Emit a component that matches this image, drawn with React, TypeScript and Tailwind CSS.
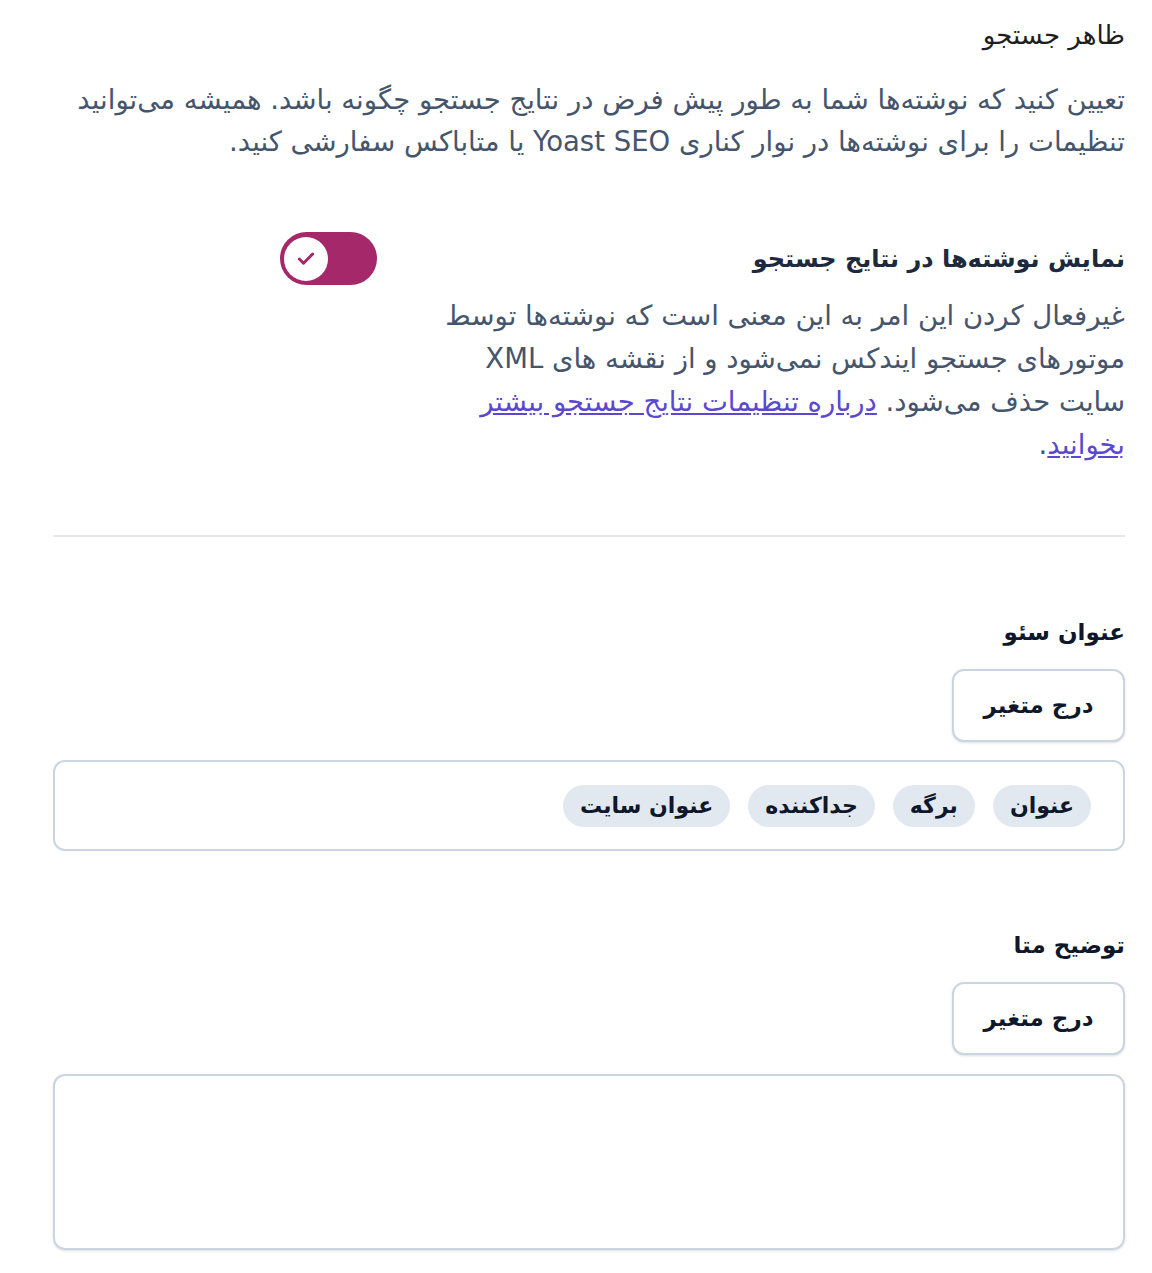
import { Check } from 'lucide-react';

const CHIPS = ['عنوان', 'برگه', 'جداکننده', 'عنوان سایت'];

const InsertVariable = () => (
  <button
    type="button"
    className="h-[73px] w-[173px] rounded-xl border-2 border-slate-300 bg-white text-[23px] font-bold text-slate-900 shadow-sm"
  >
    درج متغیر
  </button>
);

const App = () => {
  return (
    <div
      dir="rtl"
      className="min-h-[1273px] bg-white pl-[53px] pr-[27px] pt-[14px] text-slate-600"
      style={{ fontFamily: '"DejaVu Sans", sans-serif' }}
    >
      <h2 className="text-[26px] leading-[42px] text-[#1e1e1e]">ظاهر جستجو</h2>
      <p className="mt-[22px] text-[27.5px] leading-[42px] text-slate-600">
        تعیین کنید که نوشته‌ها شما به طور پیش فرض در نتایج جستجو چگونه باشد. همیشه می‌توانید
        تنظیمات را برای نوشته‌ها در نوار کناری Yoast SEO یا متاباکس سفارشی کنید.
      </p>

      <div className="mt-[76px] flex items-start gap-[63px]">
        <div className="w-[685px]">
          <p className="text-[24px] font-bold leading-[42px] text-slate-800">
            نمایش نوشته‌ها در نتایج جستجو
          </p>
          <p className="mt-[14px] text-[27.5px] leading-[43px] text-slate-600">
            غیرفعال کردن این امر به این معنی است که نوشته‌ها توسط
            <br />
            موتورهای جستجو ایندکس نمی‌شود و از نقشه های XML
            <br />
            سایت حذف می‌شود.{' '}
            <a href="#" className="text-[#5b48d0] underline">
              درباره تنظیمات نتایج جستجو بیشتر بخوانید
            </a>
            .
          </p>
        </div>
        <div className="mt-[-6px] flex h-[53px] w-[97px] items-center justify-end rounded-full bg-[#a4286a] px-[4px]">
          <span className="flex size-[44px] items-center justify-center rounded-full bg-white">
            <Check className="size-[20px] text-[#a4286a]" strokeWidth={3.5} />
          </span>
        </div>
      </div>

      <hr className="mt-[69px] border-t-2 border-gray-200" />

      <p className="mt-[74px] text-[23px] font-bold leading-[42px] text-slate-900">عنوان سئو</p>
      <div className="mt-[16px]">
        <InsertVariable />
      </div>
      <div className="mt-[18px] flex h-[91px] items-center gap-[18px] rounded-xl border-2 border-slate-300 px-[32px]">
        {CHIPS.map((chip) => (
          <span
            key={chip}
            className="rounded-full bg-slate-200 px-[17px] text-[22px] font-bold leading-[42px] text-slate-900"
          >
            {chip}
          </span>
        ))}
      </div>

      <p className="mt-[73px] text-[23px] font-bold leading-[42px] text-slate-900">توضیح متا</p>
      <div className="mt-[16px]">
        <InsertVariable />
      </div>
      <textarea className="mt-[19px] block h-[176px] w-full resize-none rounded-xl border-2 border-slate-300 shadow-sm" />
    </div>
  );
};

export default App;
